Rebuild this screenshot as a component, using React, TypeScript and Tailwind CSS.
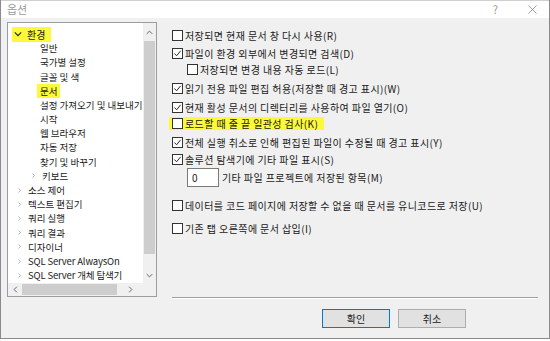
import React from 'react';

type TreeRow = {
    label: string;
    level: 0 | 1;
    arrow?: 'open' | 'closed';
    highlight?: boolean;
};

type OptionRow = {
    label: string;
    checked: boolean;
    indent?: boolean;
    highlight?: boolean;
    mt: string;
};

const treeRows: TreeRow[] = [
    { label: '환경', level: 0, arrow: 'open', highlight: true },
    { label: '일반', level: 1 },
    { label: '국가별 설정', level: 1 },
    { label: '글꼴 및 색', level: 1 },
    { label: '문서', level: 1, highlight: true },
    { label: '설정 가져오기 및 내보내기', level: 1 },
    { label: '시작', level: 1 },
    { label: '웹 브라우저', level: 1 },
    { label: '자동 저장', level: 1 },
    { label: '찾기 및 바꾸기', level: 1 },
    { label: '키보드', level: 1, arrow: 'closed' },
    { label: '소스 제어', level: 0, arrow: 'closed' },
    { label: '텍스트 편집기', level: 0, arrow: 'closed' },
    { label: '쿼리 실행', level: 0, arrow: 'closed' },
    { label: '쿼리 결과', level: 0, arrow: 'closed' },
    { label: '디자이너', level: 0, arrow: 'closed' },
    { label: 'SQL Server AlwaysOn', level: 0, arrow: 'closed' },
    { label: 'SQL Server 개체 탐색기', level: 0, arrow: 'closed' },
];

const optionsTop: OptionRow[] = [
    { label: '저장되면 현재 문서 창 다시 사용(R)', checked: false, mt: 'mt-[0px]' },
    { label: '파일이 환경 외부에서 변경되면 검색(D)', checked: true, mt: 'mt-[4px]' },
    { label: '저장되면 변경 내용 자동 로드(L)', checked: false, indent: true, mt: 'mt-[2px]' },
    { label: '읽기 전용 파일 편집 허용(저장할 때 경고 표시)(W)', checked: true, mt: 'mt-[5px]' },
    { label: '현재 활성 문서의 디렉터리를 사용하여 파일 열기(O)', checked: true, mt: 'mt-[5px]' },
    { label: '로드할 때 줄 끝 일관성 검사(K)', checked: false, highlight: true, mt: 'mt-[2px]' },
    { label: '전체 실행 취소로 인해 편집된 파일이 수정될 때 경고 표시(Y)', checked: true, mt: 'mt-[5px]' },
    { label: '솔루션 탐색기에 기타 파일 표시(S)', checked: true, mt: 'mt-[3px]' },
];

const optionsBottom: OptionRow[] = [
    { label: '데이터를 코드 페이지에 저장할 수 없을 때 문서를 유니코드로 저장(U)', checked: false, mt: 'mt-[11px]' },
    { label: '기존 탭 오른쪽에 문서 삽입(I)', checked: false, mt: 'mt-[9px]' },
];

function Chevron({ dir, className }: { dir: 'down' | 'right' | 'up' | 'left'; className?: string }) {
    const paths = {
        down: 'M1 3 L5 7 L9 3',
        up: 'M1 7 L5 3 L9 7',
        right: 'M3 1 L7 5 L3 9',
        left: 'M7 1 L3 5 L7 9',
    };
    return (
        <svg viewBox="0 0 10 10" className={className} fill="none" stroke="currentColor" strokeWidth="1.4">
            <path d={paths[dir]} />
        </svg>
    );
}

function CheckBox({ checked }: { checked: boolean }) {
    return (
        <div className="w-[11px] h-[11px] border border-[#333333] bg-white flex items-center justify-center shrink-0">
            {checked && (
                <svg viewBox="0 0 10 10" className="w-[9px] h-[9px]" fill="none" stroke="#222222" strokeWidth="1.1">
                    <path d="M1.5 5 L4 7.5 L8.5 2" />
                </svg>
            )}
        </div>
    );
}

function OptionLine({ row }: { row: OptionRow }) {
    return (
        <div className={`flex items-center h-[14px] ${row.mt} ${row.indent ? 'pl-[15px]' : ''}`}>
            <div className={`flex items-center h-[13px] gap-[2px] ${row.highlight ? 'bg-[#fbf93a] pr-[6px] -ml-[3px] pl-[3px]' : ''}`}>
                <CheckBox checked={row.checked} />
                <span className="whitespace-nowrap tracking-[0.4px]">{row.label}</span>
            </div>
        </div>
    );
}

function TreeLine({ row }: { row: TreeRow }) {
    // 위치는 스크린샷 기준으로 맞춤
    const latin = row.label.startsWith('SQL');
    if (row.level === 0 && row.arrow === 'open') {
        return (
            <div className="h-[14.2px] flex items-center pl-[4px]">
                <span className="bg-[#fbf93a] h-[15px] flex items-center pl-[2px] pr-[6px] gap-[5px]">
                    <Chevron dir="down" className="w-[8px] h-[8px] text-[#222222]" />
                    <span className="text-[10px]">{row.label}</span>
                </span>
            </div>
        );
    }
    if (row.level === 0) {
        return (
            <div className="h-[14.2px] flex items-center pl-[9px] gap-[6px]">
                <Chevron dir="right" className="w-[5px] h-[5px] text-[#9a9a9a]" />
                <span className={latin ? 'tracking-[-0.15px]' : ''}>{row.label}</span>
            </div>
        );
    }
    if (row.arrow === 'closed') {
        return (
            <div className="h-[14.2px] flex items-center pl-[23px] gap-[6px]">
                <Chevron dir="right" className="w-[5px] h-[5px] text-[#9a9a9a]" />
                <span>{row.label}</span>
            </div>
        );
    }
    return (
        <div className="h-[14.2px] flex items-center pl-[32px]">
            <span className={row.highlight ? 'bg-[#fbf93a] h-[14px] flex items-center px-[3px] -ml-[3px]' : ''}>{row.label}</span>
        </div>
    );
}

export default function App() {
    return (
        <div
            className="w-[550px] h-[341px] bg-white text-[10px] text-[#1a1a1a] overflow-hidden"
            style={{ fontFamily: '"Noto Sans CJK KR", "Noto Sans", sans-serif' }}
        >
            <div className="w-[550px] h-[339px] flex flex-col border-x border-b border-[#8a8a8a] bg-[#f0f0f0]">
                {/* 제목 표시줄 */}
                <div className="h-[18px] bg-white flex items-center pl-[6px] pr-[12px] border-t border-[#d0d0d0] shrink-0">
                    <span className="text-[#9a9a9a] text-[11px]">옵션</span>
                    <div className="ml-auto flex items-center gap-[30px] text-[#9a9a9a]">
                        <span className="text-[11px]">?</span>
                        <svg viewBox="0 0 10 10" className="w-[9px] h-[9px]" fill="none" stroke="#8a8a8a" strokeWidth="0.9">
                            <path d="M0.5 0.5 L9.5 9.5 M9.5 0.5 L0.5 9.5" />
                        </svg>
                    </div>
                </div>

                <div className="flex flex-1 pt-[4px]">
                    {/* 트리 */}
                    <div className="ml-[6px] w-[150px] h-[275px] border border-[#9a9ca2] bg-white flex flex-col shrink-0">
                        <div className="flex flex-1 min-h-0">
                            <div className="flex-1 overflow-hidden whitespace-nowrap pt-[4px] text-[9.5px]">
                                {treeRows.map((row, i) => (
                                    <TreeLine key={i} row={row} />
                                ))}
                            </div>
                            <div className="w-[13px] bg-[#f0f0f0] flex flex-col items-center">
                                <div className="h-[18px] flex items-center justify-center">
                                    <Chevron dir="up" className="w-[7px] h-[7px] text-[#606060]" />
                                </div>
                                <div className="w-[11px] h-[213px] bg-[#cdcdcd]" />
                                <div className="flex-1 flex items-end justify-center pb-[4px]">
                                    <Chevron dir="down" className="w-[7px] h-[7px] text-[#606060]" />
                                </div>
                            </div>
                        </div>
                        <div className="h-[13px] flex shrink-0">
                            <div className="flex-1 bg-[#f0f0f0] flex items-center">
                                <div className="w-[14px] flex justify-center">
                                    <Chevron dir="left" className="w-[7px] h-[7px] text-[#606060]" />
                                </div>
                                <div className="w-[95px] h-[11px] bg-[#cdcdcd]" />
                                <div className="flex-1 flex justify-center">
                                    <Chevron dir="right" className="w-[7px] h-[7px] text-[#606060]" />
                                </div>
                            </div>
                            <div className="w-[13px] bg-[#f0f0f0]" />
                        </div>
                    </div>

                    {/* 옵션 */}
                    <div className="ml-[15px] mr-[11px] flex-1 flex flex-col pt-[6px]">
                        {optionsTop.map((row, i) => (
                            <OptionLine key={i} row={row} />
                        ))}
                        <div className="flex items-center mt-[2px] pl-[15px] gap-[3px]">
                            <div className="w-[32px] h-[19px] border border-[#7a7a7a] bg-white flex items-center pl-[4px]">0</div>
                            <span className="whitespace-nowrap tracking-[0.4px]">기타 파일 프로젝트에 저장된 항목(M)</span>
                        </div>
                        {optionsBottom.map((row, i) => (
                            <OptionLine key={i} row={row} />
                        ))}

                        <div className="flex-1" />
                        <div className="h-[2px] border-t border-[#a0a0a0] border-b border-b-white" />
                        <div className="flex gap-[8px] mt-[10px] mb-[10px] pl-[150px]">
                            <button className="w-[68px] h-[19px] bg-[#e1e1e1] border border-[#0078d7] flex items-center justify-center">
                                확인
                            </button>
                            <button className="w-[68px] h-[19px] bg-[#e1e1e1] border border-[#adadad] flex items-center justify-center">
                                취소
                            </button>
                        </div>
                    </div>
                </div>
            </div>
        </div>
    );
}
